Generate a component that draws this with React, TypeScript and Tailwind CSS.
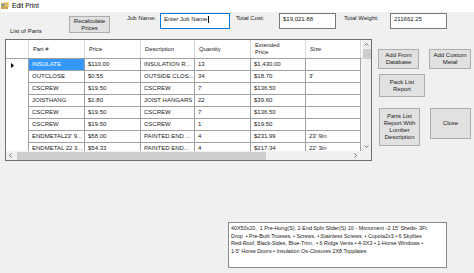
import React from "react";

const rows = [
  ["INSULATE", "$110.00", "INSULATION R...", "13", "$1,430.00", ""],
  ["OUTCLOSE", "$0.55", "OUTSIDE CLOS...", "34", "$18.70", "3'"],
  ["CSCREW", "$19.50", "CSCREW", "7", "$136.50", ""],
  ["JOISTHANG", "$1.80", "JOIST HANGARS", "22", "$39.60", ""],
  ["CSCREW", "$19.50", "CSCREW", "7", "$136.50", ""],
  ["CSCREW", "$19.50", "CSCREW", "1", "$19.50", ""],
  ["ENDMETAL23' 9...", "$58.00", "PAINTED END ...", "4", "$231.99", "23' 9in"],
  ["ENDMETAL 22 3...", "$54.33", "PAINTED END...", "4", "$217.34", "22' 3in"],
];

const widths = [56, 56, 54, 56, 55, 55];
const headers = ["Part #", "Price", "Description", "Quantity", "Extended\nPrice", "Size"];

function Btn({ children, className }: { children: React.ReactNode; className: string }) {
  return (
    <div
      className={
        "flex items-center justify-center text-center bg-[#e1e1e1] border border-[#adadad] text-[6px] leading-[7px] text-[#1a1a1a] " +
        className
      }
    >
      <div>{children}</div>
    </div>
  );
}

export default function App() {
  return (
    <div
      className="w-[474px] h-[273px] bg-[#f0f0f0] overflow-hidden flex flex-col text-[#1a1a1a]"
      style={{ fontFamily: '"Liberation Sans", Arial, sans-serif' }}
    >
      {/* title bar */}
      <div className="h-[12px] bg-white flex items-center shrink-0">
        <svg width="9" height="8" viewBox="0 0 9 8" className="ml-[1px]">
          <rect x="0" y="1" width="7" height="6" fill="#c9a24a" />
          <rect x="1" y="2" width="5" height="2" fill="#6c8fc7" />
          <rect x="3" y="0" width="5" height="5" fill="#e6c36a" opacity="0.8" />
        </svg>
        <span className="ml-[2px] text-[6.6px] leading-[8px] text-black">Edit Print</span>
      </div>

      {/* top controls */}
      <div className="h-[27px] flex items-start shrink-0">
        <div className="ml-[10px] w-[59px] mt-[16px] text-[6px] leading-[7px]">List of Parts</div>
        <Btn className="w-[41px] h-[17px] mt-[4px]">
          Recalculate
          <br />
          Prices
        </Btn>
        <div className="ml-[17px] w-[33px] mt-[3px] text-[6px] leading-[7px]">Job Name:</div>
        <div className="w-[70px] h-[16px] mt-[1px] bg-white border border-[#0078d7] text-[6px] leading-[7px] pl-[3px] pt-[2px] flex items-start">
          Enter Job Name<span className="ml-[0.5px] w-[0.6px] h-[7px] bg-black" />
        </div>
        <div className="ml-[6px] w-[43px] mt-[3px] text-[6px] leading-[7px]">Total Cost:</div>
        <div className="w-[57px] h-[16px] mt-[1px] bg-white border border-[#7a7a7a] text-[6px] leading-[7px] pl-[3px] pt-[2px]">
          $19,021.88
        </div>
        <div className="ml-[8px] w-[46px] mt-[3px] text-[6px] leading-[7px]">Total Weight:</div>
        <div className="w-[57px] h-[16px] mt-[1px] bg-white border border-[#7a7a7a] text-[6px] leading-[7px] pl-[3px] pt-[2px]">
          211662.25
        </div>
      </div>

      {/* grid + buttons */}
      <div className="flex shrink-0">
        <div className="ml-[5px] w-[367px] h-[122px] border border-[#6e6e6e] bg-white flex flex-col">
          <div className="flex flex-1 min-h-0">
            <div className="w-[356px] overflow-hidden">
              {/* header */}
              <div className="flex h-[19px] border-b border-[#a0a0a0]">
                <div className="w-[23px] border-r border-[#d6d6d6]" />
                {headers.map((h, i) => (
                  <div
                    key={i}
                    style={{ width: widths[i] }}
                    className="border-r border-[#d6d6d6] flex items-center pl-[4px] text-[5.8px] leading-[7px] whitespace-pre"
                  >
                    {h}
                  </div>
                ))}
              </div>
              {rows.map((r, ri) => (
                <div key={ri} className="flex h-[12px]">
                  <div className="w-[23px] border-r border-[#a0a0a0] flex items-center pl-[5px]">
                    {ri === 0 && (
                      <svg width="3" height="5" viewBox="0 0 3 5">
                        <path d="M0 0 L3 2.5 L0 5 Z" fill="#000" />
                      </svg>
                    )}
                  </div>
                  {r.map((c, ci) => (
                    <div
                      key={ci}
                      style={{ width: widths[ci] }}
                      className={
                        "border-r border-b border-[#a0a0a0] flex items-center pl-[3px] text-[6px] leading-[7px] whitespace-nowrap overflow-hidden " +
                        (ri === 0 && ci === 0 ? "bg-[#3399ff] text-white" : "")
                      }
                    >
                      {c}
                    </div>
                  ))}
                </div>
              ))}
            </div>
            {/* vertical scrollbar */}
            <div className="w-[9px] bg-[#f0f0f0] flex flex-col items-center">
              <svg width="7" height="9" viewBox="0 0 7 9">
                <path d="M1.5 5.5 L3.5 3.5 L5.5 5.5" stroke="#606060" strokeWidth="0.9" fill="none" />
              </svg>
              <div className="w-[8px] h-[10px] bg-[#cdcdcd]" />
              <div className="flex-1" />
              <svg width="7" height="9" viewBox="0 0 7 9">
                <path d="M1.5 3.5 L3.5 5.5 L5.5 3.5" stroke="#606060" strokeWidth="0.9" fill="none" />
              </svg>
            </div>
          </div>
          {/* horizontal scrollbar */}
          <div className="h-[9px] flex bg-[#f0f0f0]">
            <div className="w-[356px] flex items-center">
              <svg width="9" height="9" viewBox="0 0 9 9">
                <path d="M5.5 2.5 L3.5 4.5 L5.5 6.5" stroke="#606060" strokeWidth="0.9" fill="none" />
              </svg>
              <div className="ml-[2px] w-[249px] h-[8px] bg-[#cdcdcd]" />
              <div className="flex-1" />
              <svg width="9" height="9" viewBox="0 0 9 9" className="mr-[2px]">
                <path d="M3.5 2.5 L5.5 4.5 L3.5 6.5" stroke="#606060" strokeWidth="0.9" fill="none" />
              </svg>
            </div>
            <div className="w-[9px]" />
          </div>
        </div>

        {/* buttons */}
        <div className="flex flex-col">
          <div className="flex mt-[10px]">
            <Btn className="ml-[6px] w-[41px] h-[20px]">
              Add From
              <br />
              Database
            </Btn>
            <Btn className="ml-[10px] w-[42px] h-[20px]">
              Add Custom
              <br />
              Metal
            </Btn>
          </div>
          <div className="flex mt-[5px]">
            <Btn className="ml-[7px] w-[46px] h-[23px]">
              Pack List
              <br />
              Report
            </Btn>
          </div>
          <div className="flex items-start mt-[11px]">
            <Btn className="ml-[7px] w-[41px] h-[38px]">
              Parts List
              <br />
              Report With
              <br />
              Lumber
              <br />
              Description
            </Btn>
            <Btn className="ml-[10px] w-[41px] h-[31px]">Close</Btn>
          </div>
        </div>
      </div>

      {/* notes textbox */}
      <div className="ml-[228px] mt-[61px] w-[219px] h-[46px] bg-white border border-[#8a8a8a] px-[2px] pt-[2px] text-[5.4px] leading-[7.6px] whitespace-nowrap overflow-hidden shrink-0">
        <div>40X50x20,&nbsp; 1 Pre-Hung(S), 2-End Split Slider(S) 10 - Monument -2 15' Sheds- 3Ft</div>
        <div>Drop &nbsp;• Pre-Built Trusses, • Screws, • Stainless Screws, • Cupola2x3 • 6 Skylites</div>
        <div>Red-Roof, Black-Sides, Blue-Trim, &nbsp;• 6 Ridge Vents • 4-3X3 • 1-Horse Windows •</div>
        <div>1-5' Horse Doors • Insulation Os-Closures 2X8 Topplates</div>
      </div>
    </div>
  );
}
